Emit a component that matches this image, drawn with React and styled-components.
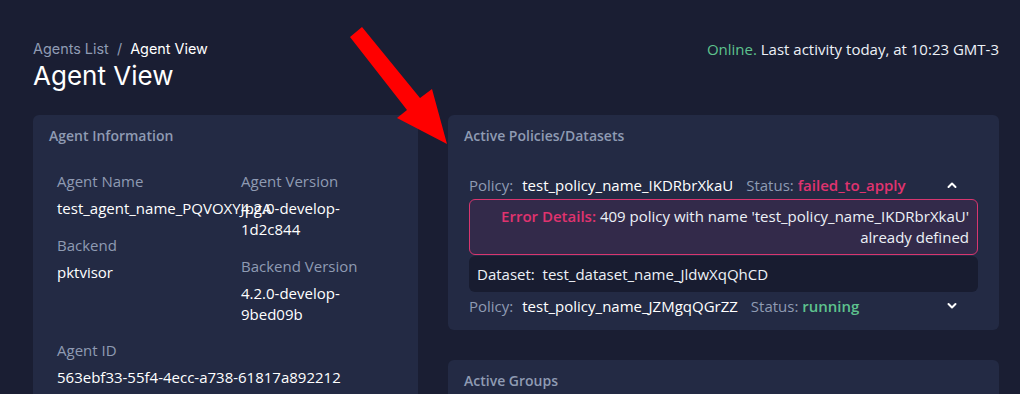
import styled, { createGlobalStyle } from "styled-components";

const GlobalStyle = createGlobalStyle`
  html, body {
    margin: 0;
    padding: 0;
    background: #1a1e33;
  }
  body {
    font-family: "Open Sans", "Liberation Sans", sans-serif;
    color: #edf1f7;
    overflow: hidden;
  }
`;

const Page = styled.div`
  position: relative;
  box-sizing: border-box;
  width: 1020px;
  height: 394px;
  overflow: hidden;
  padding: 38px 21px 0 33px;
`;

const TopBar = styled.div`
  display: flex;
  justify-content: space-between;
  align-items: flex-start;
`;

const Breadcrumb = styled.div`
  font-family: Inter, "Liberation Sans", sans-serif;
  font-size: 14.4px;
  line-height: 22px;
  color: #8f9bb3;

  span {
    color: #ffffff;
  }
`;

const Title = styled.h1`
  margin: 0;
  font-family: Inter, "Liberation Sans", sans-serif;
  font-weight: 400;
  font-size: 26px;
  line-height: 31px;
  color: #ffffff;
`;

const Activity = styled.div`
  font-size: 15px;
  line-height: 22px;
  color: #edf1f7;

  b {
    font-weight: 400;
    color: #5ec28e;
  }
`;

const Columns = styled.div`
  display: grid;
  grid-template-columns: 385px 1fr;
  gap: 30px;
  margin-top: 24px;
  align-items: start;
`;

const Stack = styled.div`
  display: flex;
  flex-direction: column;
  gap: 30px;
`;

const Card = styled.div`
  background: #232a44;
  border-radius: 6px;
  overflow: hidden;
`;

const CardHeader = styled.div`
  padding: 10px 16px;
  font-size: 14px;
  line-height: 22px;
  font-weight: 600;
  color: #8f9bb3;
`;

const InfoBody = styled.div`
  padding: 13px 24px 24px;
  display: grid;
  grid-template-columns: 184px 152px;
`;

const InfoColumn = styled.div`
  display: flex;
  flex-direction: column;
  gap: 15px;
`;

const InfoWide = styled.div`
  grid-column: 1 / -1;
  margin-top: 14px;
`;

const Field = styled.div`
  display: flex;
  flex-direction: column;
  gap: 6px;
`;

const Label = styled.div`
  font-size: 15px;
  line-height: 22px;
  color: #8f9bb3;
`;

const Value = styled.div`
  font-size: 15px;
  line-height: 21px;
  color: #ffffff;
  white-space: ${(p) => (p.$nowrap ? "nowrap" : "normal")};
`;

const PolicyBody = styled.div`
  padding: 14px 21px 10px;
  min-height: ${(p) => p.$minHeight || 0}px;
`;

const PolicyRow = styled.div`
  display: flex;
  align-items: center;
  height: 28px;
  font-size: 15px;
  line-height: 20px;
  color: #ffffff;
`;

const Muted = styled.span`
  color: #8f9bb3;
  margin-right: 9px;
`;

const Status = styled.span`
  margin-left: 13px;
  color: #8f9bb3;

  strong {
    font-weight: 600;
    color: ${(p) => (p.$ok ? "#5ec28e" : "#e0336f")};
  }
`;

const Chevron = styled.svg`
  margin-left: auto;
  margin-right: 21px;
  width: 10px;
  height: 8px;
`;

const ErrorBox = styled.div`
  border: 1px solid #d8366f;
  border-radius: 6px;
  background: #332a4a;
  padding: 6px 8px;
  font-size: 15px;
  line-height: 21px;
  text-align: right;
  color: #edf1f7;

  strong {
    font-weight: 600;
    color: #e0336f;
  }
`;

const DatasetBox = styled.div`
  margin: 1px 0 0;
  background: #181c30;
  border-radius: 6px;
  padding: 8px 8px;
  font-size: 15px;
  line-height: 20px;
  color: #edf1f7;
`;

const Arrow = styled.svg`
  position: absolute;
  left: 0;
  top: 0;
  pointer-events: none;
`;

const ChevronIcon = ({ up }) => (
  <Chevron viewBox="0 0 10 8">
    <path
      d={up ? "M1.5 6 L5 2.5 L8.5 6" : "M1.5 2 L5 5.5 L8.5 2"}
      fill="none"
      stroke="#ffffff"
      strokeWidth="2"
      strokeLinecap="round"
      strokeLinejoin="round"
    />
  </Chevron>
);

export default function App() {
  return (
    <>
      <GlobalStyle />
      <Page>
        <TopBar>
          <div>
            <Breadcrumb>
              Agents List &nbsp;/&nbsp; <span>Agent View</span>
            </Breadcrumb>
            <Title>Agent View</Title>
          </div>
          <Activity>
            <b>Online.</b> Last activity today, at 10:23 GMT-3
          </Activity>
        </TopBar>
        <Columns>
          <Card>
            <CardHeader>Agent Information</CardHeader>
            <InfoBody>
              <InfoColumn>
                <Field>
                  <Label>Agent Name</Label>
                  <Value $nowrap>test_agent_name_PQVOXYJpgA</Value>
                </Field>
                <Field>
                  <Label>Backend</Label>
                  <Value>pktvisor</Value>
                </Field>
              </InfoColumn>
              <InfoColumn>
                <Field>
                  <Label>Agent Version</Label>
                  <Value>4.2.0-develop-1d2c844</Value>
                </Field>
                <Field>
                  <Label>Backend Version</Label>
                  <Value>4.2.0-develop-9bed09b</Value>
                </Field>
              </InfoColumn>
              <InfoWide>
                <Field>
                  <Label>Agent ID</Label>
                  <Value>563ebf33-55f4-4ecc-a738-61817a892212</Value>
                </Field>
              </InfoWide>
            </InfoBody>
          </Card>
          <Stack>
            <Card>
              <CardHeader>Active Policies/Datasets</CardHeader>
              <PolicyBody>
                <PolicyRow>
                  <Muted>Policy:</Muted>
                  test_policy_name_IKDRbrXkaU
                  <Status>
                    Status: <strong>failed_to_apply</strong>
                  </Status>
                  <ChevronIcon up />
                </PolicyRow>
                <ErrorBox>
                  <strong>Error Details:</strong> 409 policy with name
                  'test_policy_name_IKDRbrXkaU' already defined
                </ErrorBox>
                <DatasetBox>Dataset:&nbsp; test_dataset_name_JldwXqQhCD</DatasetBox>
                <PolicyRow>
                  <Muted>Policy:</Muted>
                  test_policy_name_JZMgqQGrZZ
                  <Status $ok>
                    Status: <strong>running</strong>
                  </Status>
                  <ChevronIcon />
                </PolicyRow>
              </PolicyBody>
            </Card>
            <Card>
              <CardHeader>Active Groups</CardHeader>
              <PolicyBody $minHeight={80} />
            </Card>
          </Stack>
        </Columns>
        <Arrow width="1020" height="394">
          <polygon
            points="350,37 362,27 420,98 432,89 447,144 397,118 407,110"
            fill="#ff0000"
          />
        </Arrow>
      </Page>
    </>
  );
}
